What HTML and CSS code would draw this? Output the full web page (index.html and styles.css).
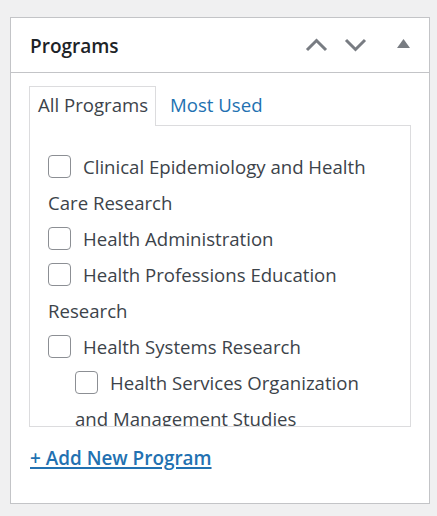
FILE: index.html
```html
<!DOCTYPE html>
<html>
<head>
<meta charset="utf-8">
<link rel="stylesheet" href="styles.css">
</head>
<body>
<div class="page">
  <div class="postbox">
    <div class="postbox-header">
      <h2 class="title">Programs</h2>
      <div class="actions">
        <span class="btn btn-up"><svg width="23" height="14" viewBox="0 0 23 14"><polyline points="2,12 11.5,2.5 21,12" fill="none" stroke="#787c82" stroke-width="3"/></svg></span>
        <span class="btn btn-down"><svg width="23" height="14" viewBox="0 0 23 14"><polyline points="2,2 11.5,11.5 21,2" fill="none" stroke="#787c82" stroke-width="3"/></svg></span>
        <span class="btn btn-toggle"><svg width="13" height="9" viewBox="0 0 13 9"><polygon points="0,9 6.5,0 13,9" fill="#787c82"/></svg></span>
      </div>
    </div>
    <div class="inside">
      <ul class="tabs">
        <li class="tab active">All Programs</li>
        <li class="tab"><a href="#">Most Used</a></li>
      </ul>
      <div class="panel">
        <ul class="checklist">
          <li><label><input type="checkbox" class="cb">Clinical Epidemiology and Health Care Research</label></li>
          <li><label><input type="checkbox" class="cb">Health Administration</label></li>
          <li><label><input type="checkbox" class="cb">Health Professions Education Research</label></li>
          <li><label><input type="checkbox" class="cb">Health Systems Research</label>
            <ul class="children">
              <li><label><input type="checkbox" class="cb">Health Services Organization and Management Studies</label></li>
            </ul>
          </li>
        </ul>
      </div>
      <p class="add"><a href="#">+ Add New Program</a></p>
    </div>
  </div>
</div>
</body>
</html>
```

FILE: styles.css
```css
html, body {
  margin: 0;
  background: #f0f0f1;
  font-family: "Open Sans", "Noto Sans", sans-serif;
}
.page {
  padding: 17px 7px 0 10px;
}
.postbox {
  background: #fff;
  border: 1px solid #c3c4c7;
  height: 487px;
  box-sizing: border-box;
}
.postbox-header {
  height: 55px;
  box-sizing: border-box;
  border-bottom: 1px solid #c3c4c7;
  display: flex;
  align-items: center;
  padding: 0 19px 0 19px;
}
.title {
  margin: 0;
  flex: 1;
  font-size: 19px;
  font-weight: 600;
  color: #1d2327;
  padding-top: 2px;
}
.actions {
  display: flex;
  align-items: center;
}
.btn {
  display: flex;
}
.btn-down {
  margin-left: 16px;
}
.btn-toggle {
  margin-left: 30px;
  margin-top: -4px;
}
.inside {
  padding: 13px 18px 0 18px;
}
.tabs {
  list-style: none;
  margin: 0;
  padding: 0;
  display: flex;
}
.tab {
  position: relative;
  font-size: 18.6px;
  line-height: 35px;
  padding: 0 7px 4px 8px;
  border: 1px solid transparent;
  border-bottom: none;
  margin-bottom: -1px;
  color: #3c434a;
}
.tab.active {
  border-color: #dcdcde;
  background: #fff;
}
.tab a {
  color: #2271b1;
  text-decoration: none;
}
.tab + .tab {
  margin-left: 5px;
}
.panel {
  border: 1px solid #dcdcde;
  height: 302px;
  box-sizing: border-box;
  overflow: hidden;
  padding: 23px 30px 0 18px;
}
.checklist, .children {
  list-style: none;
  margin: 0;
  padding: 0;
}
.checklist li {
  font-size: 18.6px;
  line-height: 36px;
  color: #3c434a;
}
.children {
  margin-left: 27px;
}
.cb {
  appearance: none;
  -webkit-appearance: none;
  width: 23px;
  height: 23px;
  box-sizing: border-box;
  border: 1px solid #8c8f94;
  border-radius: 4px;
  background: #fff;
  margin: 0 12px 0 0;
  vertical-align: -4px;
}
.add {
  margin: 13px 0 0 1px;
  font-size: 18.9px;
  line-height: 36px;
  font-weight: 600;
}
.add a {
  color: #2271b1;
  text-decoration: underline;
  text-decoration-thickness: 2px;
  text-underline-offset: 2px;
}
```
